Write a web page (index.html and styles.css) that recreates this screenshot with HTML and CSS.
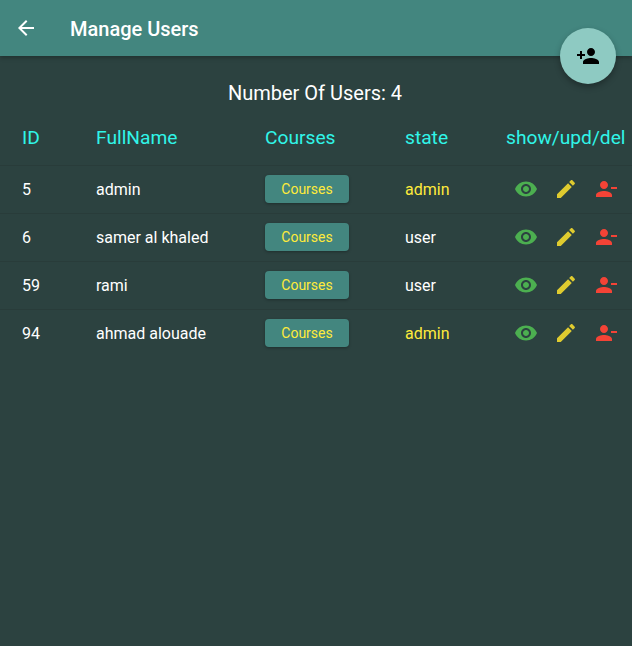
FILE: index.html
```html
<!DOCTYPE html>
<html lang="en">

<head>
  <meta charset="UTF-8">
  <meta name="viewport" content="width=device-width, initial-scale=1.0">
  <title>Manage Users</title>
  <link rel="stylesheet" href="styles.css">
</head>

<body>

  <header class="app-bar">
    <svg class="icon back-icon" viewBox="0 0 24 24"><path d="M20 11H7.83l5.59-5.59L12 4l-8 8 8 8 1.41-1.41L7.83 13H20v-2z"/></svg>
    <h1>Manage Users</h1>
  </header>

  <button class="fab" type="button">
    <svg class="icon" viewBox="0 0 24 24"><path d="M15 12c2.21 0 4-1.79 4-4s-1.79-4-4-4-4 1.79-4 4 1.79 4 4 4zm-9-2V7H4v3H1v2h3v3h2v-3h3v-2H6zm9 4c-2.67 0-8 1.34-8 4v2h16v-2c0-2.66-5.33-4-8-4z"/></svg>
  </button>

  <p class="user-count">Number Of Users: 4</p>

  <div class="users">
    <div class="row head">
      <span>ID</span>
      <span>FullName</span>
      <span>Courses</span>
      <span>state</span>
      <span>show/upd/del</span>
    </div>

    <div class="row">
      <span>5</span>
      <span>admin</span>
      <span><button class="courses-btn" type="button">Courses</button></span>
      <span class="is-admin">admin</span>
      <span class="actions">
        <svg class="icon show" viewBox="0 0 24 24"><path d="M12 4.5C7 4.5 2.73 7.61 1 12c1.73 4.39 6 7.5 11 7.5s9.27-3.11 11-7.5c-1.73-4.39-6-7.5-11-7.5zM12 17c-2.76 0-5-2.24-5-5s2.24-5 5-5 5 2.24 5 5-2.24 5-5 5zm0-8c-1.66 0-3 1.34-3 3s1.34 3 3 3 3-1.34 3-3-1.34-3-3-3z"/></svg>
        <svg class="icon upd" viewBox="0 0 24 24"><path d="M3 17.25V21h3.75L17.81 9.94l-3.75-3.75L3 17.25zM20.71 7.04c.39-.39.39-1.02 0-1.41l-2.34-2.34c-.39-.39-1.02-.39-1.41 0l-1.83 1.83 3.75 3.75 1.83-1.83z"/></svg>
        <svg class="icon del" viewBox="0 0 24 24"><path d="M14 8c0-2.21-1.79-4-4-4S6 5.79 6 8s1.79 4 4 4 4-1.79 4-4zm3 2v2h6v-2h-6zM2 18v2h16v-2c0-2.66-5.33-4-8-4s-8 1.34-8 4z"/></svg>
      </span>
    </div>

    <div class="row">
      <span>6</span>
      <span>samer al khaled</span>
      <span><button class="courses-btn" type="button">Courses</button></span>
      <span>user</span>
      <span class="actions">
        <svg class="icon show" viewBox="0 0 24 24"><path d="M12 4.5C7 4.5 2.73 7.61 1 12c1.73 4.39 6 7.5 11 7.5s9.27-3.11 11-7.5c-1.73-4.39-6-7.5-11-7.5zM12 17c-2.76 0-5-2.24-5-5s2.24-5 5-5 5 2.24 5 5-2.24 5-5 5zm0-8c-1.66 0-3 1.34-3 3s1.34 3 3 3 3-1.34 3-3-1.34-3-3-3z"/></svg>
        <svg class="icon upd" viewBox="0 0 24 24"><path d="M3 17.25V21h3.75L17.81 9.94l-3.75-3.75L3 17.25zM20.71 7.04c.39-.39.39-1.02 0-1.41l-2.34-2.34c-.39-.39-1.02-.39-1.41 0l-1.83 1.83 3.75 3.75 1.83-1.83z"/></svg>
        <svg class="icon del" viewBox="0 0 24 24"><path d="M14 8c0-2.21-1.79-4-4-4S6 5.79 6 8s1.79 4 4 4 4-1.79 4-4zm3 2v2h6v-2h-6zM2 18v2h16v-2c0-2.66-5.33-4-8-4s-8 1.34-8 4z"/></svg>
      </span>
    </div>

    <div class="row">
      <span>59</span>
      <span>rami</span>
      <span><button class="courses-btn" type="button">Courses</button></span>
      <span>user</span>
      <span class="actions">
        <svg class="icon show" viewBox="0 0 24 24"><path d="M12 4.5C7 4.5 2.73 7.61 1 12c1.73 4.39 6 7.5 11 7.5s9.27-3.11 11-7.5c-1.73-4.39-6-7.5-11-7.5zM12 17c-2.76 0-5-2.24-5-5s2.24-5 5-5 5 2.24 5 5-2.24 5-5 5zm0-8c-1.66 0-3 1.34-3 3s1.34 3 3 3 3-1.34 3-3-1.34-3-3-3z"/></svg>
        <svg class="icon upd" viewBox="0 0 24 24"><path d="M3 17.25V21h3.75L17.81 9.94l-3.75-3.75L3 17.25zM20.71 7.04c.39-.39.39-1.02 0-1.41l-2.34-2.34c-.39-.39-1.02-.39-1.41 0l-1.83 1.83 3.75 3.75 1.83-1.83z"/></svg>
        <svg class="icon del" viewBox="0 0 24 24"><path d="M14 8c0-2.21-1.79-4-4-4S6 5.79 6 8s1.79 4 4 4 4-1.79 4-4zm3 2v2h6v-2h-6zM2 18v2h16v-2c0-2.66-5.33-4-8-4s-8 1.34-8 4z"/></svg>
      </span>
    </div>

    <div class="row">
      <span>94</span>
      <span>ahmad alouade</span>
      <span><button class="courses-btn" type="button">Courses</button></span>
      <span class="is-admin">admin</span>
      <span class="actions">
        <svg class="icon show" viewBox="0 0 24 24"><path d="M12 4.5C7 4.5 2.73 7.61 1 12c1.73 4.39 6 7.5 11 7.5s9.27-3.11 11-7.5c-1.73-4.39-6-7.5-11-7.5zM12 17c-2.76 0-5-2.24-5-5s2.24-5 5-5 5 2.24 5 5-2.24 5-5 5zm0-8c-1.66 0-3 1.34-3 3s1.34 3 3 3 3-1.34 3-3-1.34-3-3-3z"/></svg>
        <svg class="icon upd" viewBox="0 0 24 24"><path d="M3 17.25V21h3.75L17.81 9.94l-3.75-3.75L3 17.25zM20.71 7.04c.39-.39.39-1.02 0-1.41l-2.34-2.34c-.39-.39-1.02-.39-1.41 0l-1.83 1.83 3.75 3.75 1.83-1.83z"/></svg>
        <svg class="icon del" viewBox="0 0 24 24"><path d="M14 8c0-2.21-1.79-4-4-4S6 5.79 6 8s1.79 4 4 4 4-1.79 4-4zm3 2v2h6v-2h-6zM2 18v2h16v-2c0-2.66-5.33-4-8-4s-8 1.34-8 4z"/></svg>
      </span>
    </div>
  </div>

</body>

</html>
```

FILE: styles.css
```css
:root {
  --teal: #43867f;
  --background: #2c4240;
  --divider: #293c3a;
  --cyan: #30f5e8;
  --yellow: #ffeb3b;
  --white: #ffffff;
}

* {
  margin: 0;
  padding: 0;
  box-sizing: border-box;
  font-family: 'Roboto', sans-serif;
}

body {
  position: relative;
  min-height: 100vh;
  overflow: hidden;
  background-color: var(--background);
  color: var(--white);
}

.icon {
  width: 24px;
  height: 24px;
  display: block;
  fill: currentColor;
  flex: none;
}

.app-bar {
  height: 56px;
  display: flex;
  align-items: center;
  padding-left: 14px;
  background-color: var(--teal);
  box-shadow: 0 2px 4px rgba(0, 0, 0, 0.25);
}

.back-icon {
  margin-right: 32px;
}

h1 {
  font-size: 20px;
  font-weight: 500;
  padding-top: 2px;
}

.fab {
  position: absolute;
  top: 28px;
  left: 560px;
  width: 56px;
  height: 56px;
  display: flex;
  align-items: center;
  justify-content: center;
  border: none;
  border-radius: 50%;
  background-color: #8ecac2;
  color: #000000;
  box-shadow: 0 3px 6px rgba(0, 0, 0, 0.3);
}

.user-count {
  margin-top: 25px;
  height: 24px;
  line-height: 24px;
  font-size: 20px;
  text-align: center;
  padding-right: 2px;
}

.row {
  height: 48px;
  display: grid;
  grid-template-columns: 74px 169px 140px 101px 1fr;
  align-items: center;
  padding-left: 22px;
  padding-bottom: 1px;
  border-bottom: 1px solid var(--divider);
  font-size: 16px;
  white-space: nowrap;
}

.row:last-child {
  border-bottom-color: transparent;
}

.head {
  height: 56px;
  margin-top: 5px;
  font-size: 19.2px;
  color: var(--cyan);
}

.courses-btn {
  display: block;
  width: 84px;
  height: 28px;
  border: none;
  border-radius: 4px;
  background-color: var(--teal);
  color: var(--yellow);
  font-size: 14px;
  box-shadow: 0 1px 3px rgba(0, 0, 0, 0.3);
}

.is-admin {
  color: var(--yellow);
}

.actions {
  display: flex;
  gap: 16px;
  padding-left: 8px;
}

.show {
  color: #4caf50;
}

.upd {
  color: #dfcb2f;
}

.del {
  color: #f44336;
}
```
